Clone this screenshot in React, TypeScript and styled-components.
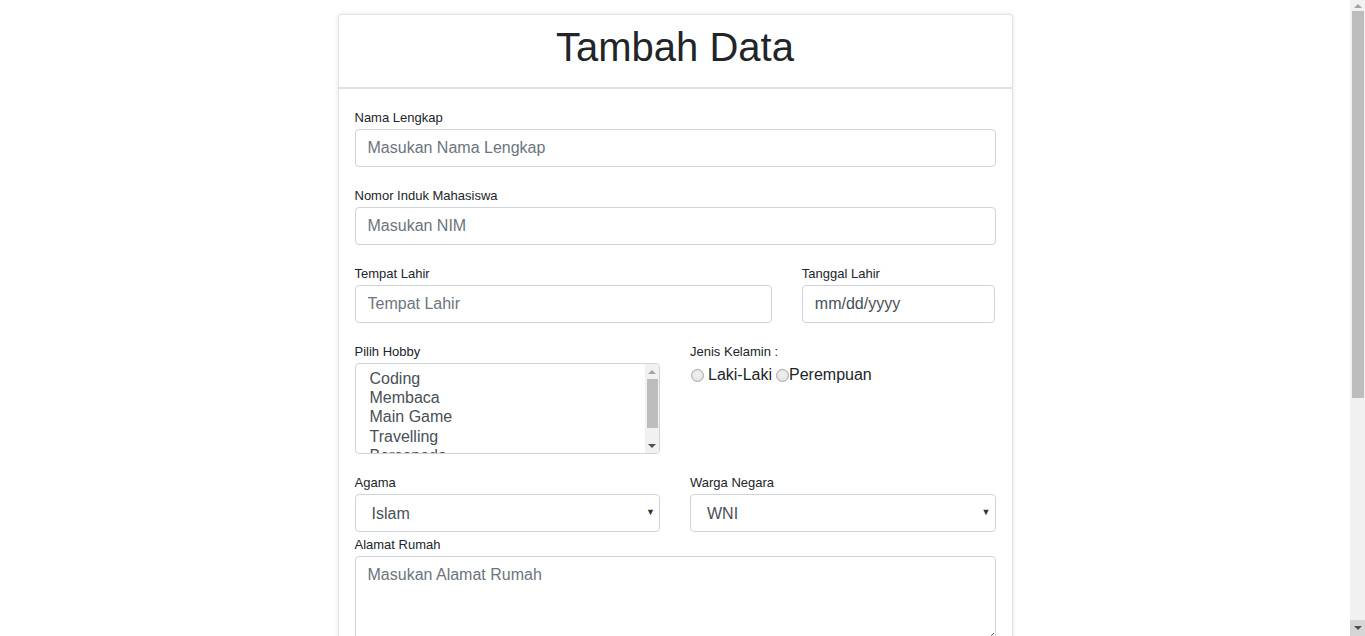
import React from "react";
import styled, { createGlobalStyle } from "styled-components";

const Global = createGlobalStyle`
  html, body { margin: 0; padding: 0; background: #fff; }
  body {
    font-family: "Liberation Sans", Arial, sans-serif;
    color: #212529;
    font-size: 16px;
    line-height: 1.5;
  }
  * { box-sizing: border-box; }
`;

const Page = styled.div`
  padding: 14px 15px 110px 0;
`;

const Card = styled.div`
  width: 675px;
  margin: 0 auto;
  background: #fff;
  border: 1px solid #e4e4e4;
  border-radius: 4px;
  box-shadow: 0 0 4px rgba(0, 0, 0, 0.12);
`;

const CardHeader = styled.div`
  padding: 8px 16px 8px;
  border-bottom: 2px solid #e2e2e2;
  text-align: center;
`;

const Title = styled.h1`
  margin: 0 0 8px;
  font-size: 40px;
  font-weight: 400;
  line-height: 1.2;
  color: #212529;
`;

const CardBody = styled.form`
  padding: 16px;
`;

const Group = styled.div<{ $mb?: number }>`
  margin-bottom: ${(p) => (p.$mb ?? 16)}px;
`;

const Label = styled.label`
  display: block;
  font-size: 13px;
  line-height: 20px;
  padding-top: 3px;
  margin-bottom: 1px;
  color: #212529;
`;

const Row = styled.div`
  display: flex;
  margin: 0 -15px;
`;

const Col = styled.div<{ $span: number }>`
  flex: 0 0 ${(p) => (p.$span / 12) * 100}%;
  max-width: ${(p) => (p.$span / 12) * 100}%;
  padding: 0 15px;
`;

const Input = styled.input<{ $dark?: boolean }>`
  display: block;
  width: 100%;
  height: 38px;
  padding: 6px 12px;
  font-family: inherit;
  font-size: 16px;
  line-height: 1.5;
  color: #495057;
  background: #fff;
  border: 1px solid #ced4da;
  border-radius: 4px;
  outline: none;
  &::placeholder {
    color: ${(p) => (p.$dark ? "#495057" : "#6c757d")};
    opacity: 1;
  }
`;

const MultiWrap = styled.div`
  position: relative;
`;

const MultiSelect = styled.select`
  display: block;
  width: 100%;
  height: 91px;
  padding: 6px 12px;
  font-family: inherit;
  font-size: 16px;
  color: #495057;
  background: #fff;
  border: 1px solid #ced4da;
  border-radius: 4px;
  outline: none;
  overflow: hidden;
  option { padding: 0 2px 0; line-height: 19px; }
`;

const ScrollBar = styled.div<{ $fixed?: boolean }>`
  position: ${(p) => (p.$fixed ? "fixed" : "absolute")};
  top: ${(p) => (p.$fixed ? "0" : "1px")};
  right: ${(p) => (p.$fixed ? "0" : "1px")};
  bottom: ${(p) => (p.$fixed ? "0" : "1px")};
  width: ${(p) => (p.$fixed ? "15px" : "14px")};
  background: #f1f1f1;
  display: flex;
  flex-direction: column;
  pointer-events: none;
  border-radius: ${(p) => (p.$fixed ? "0" : "0 3px 3px 0")};
`;

const SbButton = styled.div<{ $h: number; $bg?: string }>`
  flex: 0 0 ${(p) => p.$h}px;
  display: flex;
  align-items: center;
  justify-content: center;
  background: ${(p) => p.$bg ?? "transparent"};
`;

const Arrow = styled.span<{ $dir: "up" | "down"; $color: string }>`
  width: 0;
  height: 0;
  border-left: 4px solid transparent;
  border-right: 4px solid transparent;
  ${(p) =>
    p.$dir === "up"
      ? `border-bottom: 4px solid ${p.$color};`
      : `border-top: 4px solid ${p.$color};`}
`;

const SbTrack = styled.div`
  flex: 1;
  padding: 0 1px 0 2px;
`;

const SbThumb = styled.div<{ $h: number }>`
  height: ${(p) => p.$h}px;
  background: #bdbdbd;
`;

const Select = styled.select`
  display: block;
  width: 100%;
  height: 38px;
  padding: 6px 12px 6px 16px;
  font-family: inherit;
  font-size: 16px;
  color: #495057;
  background: #fff;
  border: 1px solid #ced4da;
  border-radius: 4px;
  outline: none;
  appearance: none;
  -webkit-appearance: none;
`;

const SelectWrap = styled.div`
  position: relative;
`;

const Caret = styled.span`
  position: absolute;
  right: 5px;
  top: 12px;
  font-size: 9px;
  line-height: 12px;
  color: #333;
  pointer-events: none;
`;

const Textarea = styled.textarea`
  display: block;
  width: 100%;
  height: 86px;
  padding: 6px 12px;
  font-family: inherit;
  font-size: 16px;
  line-height: 1.5;
  color: #495057;
  border: 1px solid #ced4da;
  border-radius: 4px;
  outline: none;
  &::placeholder { color: #6c757d; opacity: 1; }
`;

const RadioLine = styled.div`
  display: flex;
  align-items: center;
  font-size: 16px;
  line-height: 20px;
  color: #212529;
  margin-top: 3px;
`;

const Radio = styled.input<{ $ml: number; $mr: number }>`
  appearance: none;
  -webkit-appearance: none;
  width: 13px;
  height: 13px;
  margin: 0 ${(p) => p.$mr}px 0 ${(p) => p.$ml}px;
  border-radius: 50%;
  border: 1px solid #a8a8a8;
  background: radial-gradient(circle at 50% 40%, #f2f2f2 0%, #dcdcdc 100%);
`;

const Button = styled.button`
  font-family: inherit;
  font-size: 16px;
  padding: 6px 12px;
  line-height: 1.5;
  color: #fff;
  background: #007bff;
  border: 1px solid #007bff;
  border-radius: 4px;
`;

export default function App() {
  return (
    <Page>
      <Global />
      <Card>
        <CardHeader>
          <Title>Tambah Data</Title>
        </CardHeader>
        <CardBody onSubmit={(e) => e.preventDefault()}>
          <Group>
            <Label>Nama Lengkap</Label>
            <Input placeholder="Masukan Nama Lengkap" />
          </Group>
          <Group>
            <Label>Nomor Induk Mahasiswa</Label>
            <Input placeholder="Masukan NIM" />
          </Group>
          <Row>
            <Col $span={8}>
              <Group>
                <Label>Tempat Lahir</Label>
                <Input placeholder="Tempat Lahir" />
              </Group>
            </Col>
            <Col $span={4}>
              <Group>
                <Label>Tanggal Lahir</Label>
                <Input $dark placeholder="mm/dd/yyyy" />
              </Group>
            </Col>
          </Row>
          <Row>
            <Col $span={6}>
              <Group>
                <Label>Pilih Hobby</Label>
                <MultiWrap>
                  <MultiSelect multiple defaultValue={[]}>
                    <option>Coding</option>
                    <option>Membaca</option>
                    <option>Main Game</option>
                    <option>Travelling</option>
                    <option>Bersepeda</option>
                    <option>Berenang</option>
                  </MultiSelect>
                  <ScrollBar>
                    <SbButton $h={15}>
                      <Arrow $dir="up" $color="#a3a3a3" />
                    </SbButton>
                    <SbTrack>
                      <SbThumb $h={49} />
                    </SbTrack>
                    <SbButton $h={15}>
                      <Arrow $dir="down" $color="#505050" />
                    </SbButton>
                  </ScrollBar>
                </MultiWrap>
              </Group>
            </Col>
            <Col $span={6}>
              <Group>
                <Label>Jenis Kelamin :</Label>
                <RadioLine>
                  <Radio type="radio" name="jk" $ml={1} $mr={4} />
                  Laki-Laki
                  <Radio type="radio" name="jk" $ml={4} $mr={0} />
                  Perempuan
                </RadioLine>
              </Group>
            </Col>
          </Row>
          <Row>
            <Col $span={6}>
              <Group $mb={0}>
                <Label>Agama</Label>
                <SelectWrap>
                  <Select defaultValue="Islam">
                    <option>Islam</option>
                    <option>Kristen</option>
                    <option>Katolik</option>
                    <option>Hindu</option>
                    <option>Buddha</option>
                  </Select>
                  <Caret>▼</Caret>
                </SelectWrap>
              </Group>
            </Col>
            <Col $span={6}>
              <Group $mb={0}>
                <Label>Warga Negara</Label>
                <SelectWrap>
                  <Select defaultValue="WNI">
                    <option>WNI</option>
                    <option>WNA</option>
                  </Select>
                  <Caret>▼</Caret>
                </SelectWrap>
              </Group>
            </Col>
          </Row>
          <Group>
            <Label>Alamat Rumah</Label>
            <Textarea placeholder="Masukan Alamat Rumah" />
          </Group>
          <Group>
            <Label>Nomor Telepon</Label>
            <Input placeholder="Masukan Nomor Telepon" />
          </Group>
          <Group>
            <Label>Email</Label>
            <Input placeholder="Masukan Email" />
          </Group>
          <Button type="submit">Simpan</Button>
        </CardBody>
      </Card>
      <ScrollBar $fixed>
        <SbButton $h={11}>
          <Arrow $dir="up" $color="#a3a3a3" />
        </SbButton>
        <SbTrack>
          <SbThumb $h={387} />
        </SbTrack>
        <SbButton $h={16} $bg="#d6d6d6">
          <Arrow $dir="down" $color="#505050" />
        </SbButton>
      </ScrollBar>
    </Page>
  );
}
